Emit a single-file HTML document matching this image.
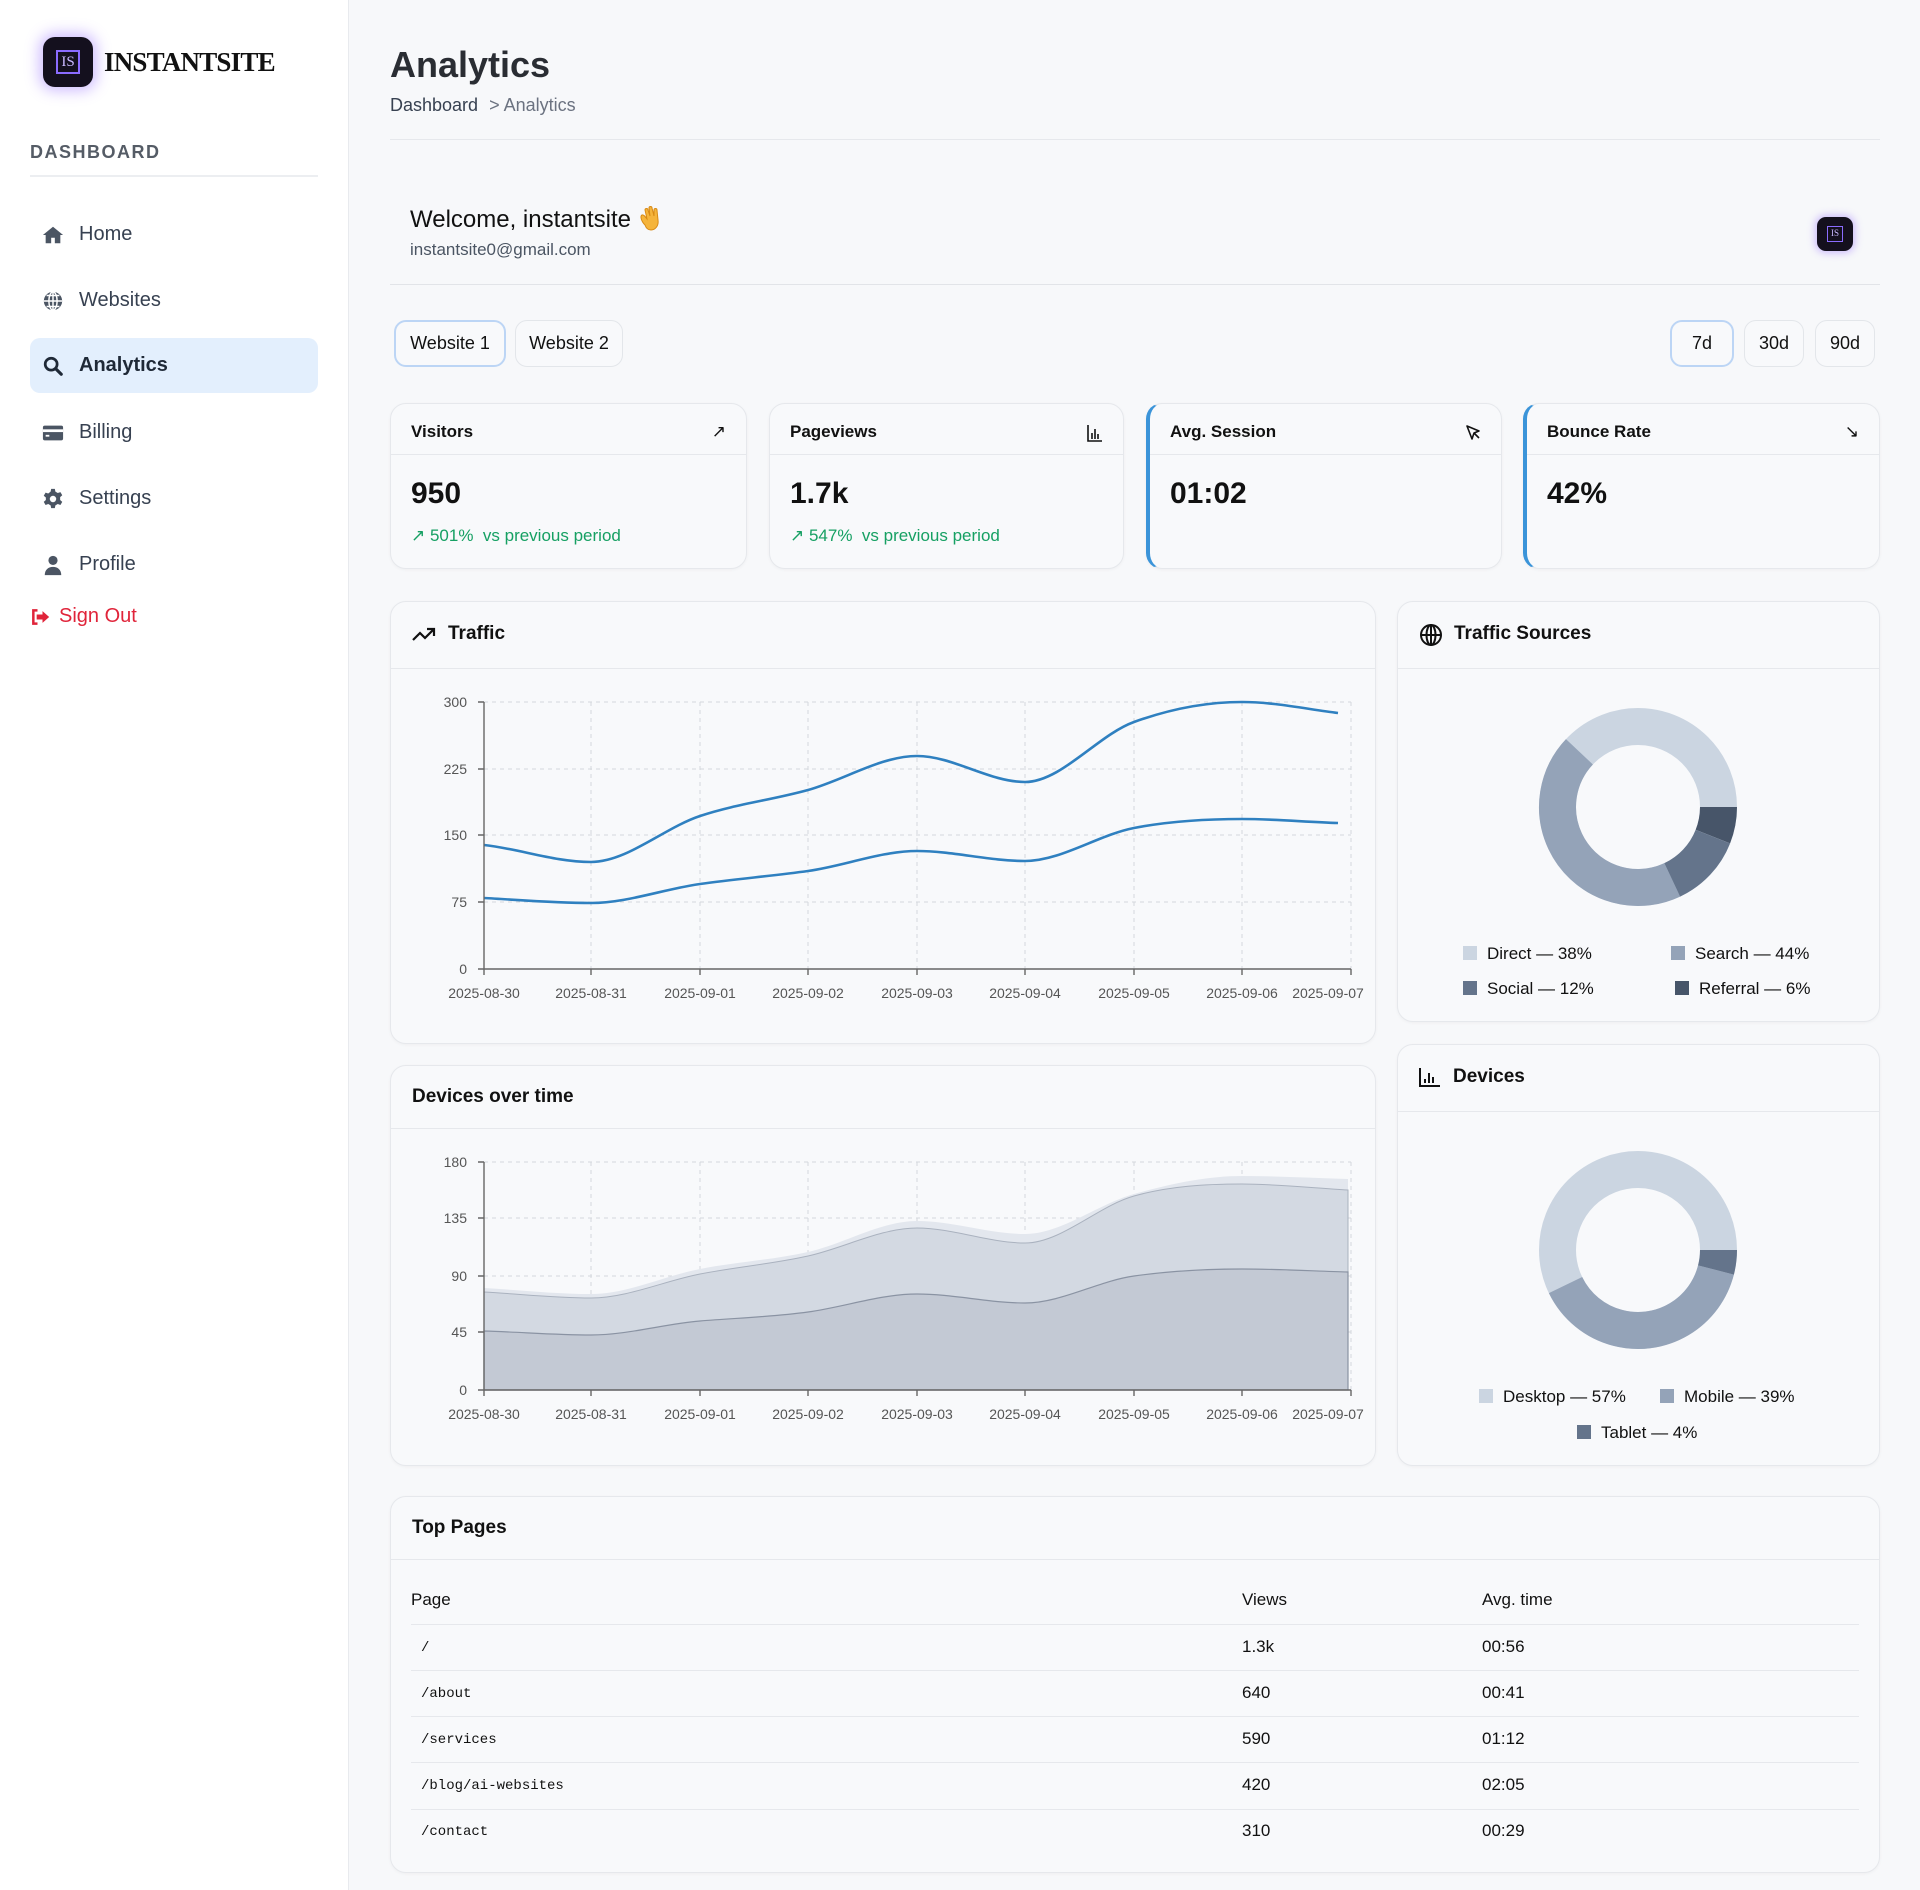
<!DOCTYPE html>
<html><head><meta charset="utf-8"><style>
*{box-sizing:border-box;margin:0;padding:0}
body{width:1920px;height:1890px;background:#f7f8fa;font-family:"Liberation Sans",Arial,sans-serif;color:#111;position:relative;overflow:hidden}
.a{position:absolute}
#side{left:0;top:0;width:349px;height:1890px;background:#fff;border-right:1px solid #e8eaee}
.nav{position:absolute;left:30px;width:288px;height:55px;display:flex;align-items:center;padding-left:12px;font-size:20px;color:#374151}
.nav svg{width:22px;height:22px;margin-right:15px;fill:#4b5563}
.card{position:absolute;background:#f8f9fb;border:1px solid #e6e8ec;border-radius:16px;box-shadow:0 1px 3px rgba(0,0,0,.04)}
.ch{position:absolute;left:0;right:0;border-bottom:1px solid #e6e8ec}
.ttl{position:absolute;font-weight:bold;font-size:19px}
.btn{position:absolute;height:47px;border:1px solid #e3e6ea;border-radius:12px;background:#f8f9fb;font-size:18px;display:flex;align-items:center;justify-content:center}
.btn.on{border:2px solid #bcd5f5}
.stt{position:absolute;left:20px;top:18px;font-size:17px;font-weight:bold}
.val{position:absolute;left:20px;top:73px;font-size:30px;font-weight:bold}
.chg{position:absolute;left:20px;top:122px;font-size:17px;color:#16a063}
.sq{display:inline-block;width:14px;height:14px;vertical-align:-1px;margin-right:10px}
.leg{position:absolute;font-size:17px;color:#111;white-space:nowrap}
.ax{font-family:"Liberation Sans",sans-serif;font-size:14px;fill:#555}
.row{position:absolute;left:411px;width:1448px;border-top:1px solid #e6e8ec}
.td{position:absolute;font-size:17px}
.mono{font-family:"Liberation Mono",monospace;font-size:14px}
</style></head><body>
<div id="side" class="a">
  <div class="a" style="left:43px;top:37px;width:50px;height:50px;border-radius:12px;background:#14101e;box-shadow:0 0 14px 4px rgba(150,110,255,.45)">
    <div class="a" style="left:13px;top:13px;width:24px;height:24px;border:2px solid #8b6cff;color:#c9b8ff;font-family:'Liberation Serif',serif;font-size:15px;text-align:center;line-height:20px">IS</div>
  </div>
  <div class="a" style="left:104px;top:47px;font-family:'Liberation Serif',serif;font-size:27px;font-weight:bold;letter-spacing:-.8px;color:#111">INSTANTSITE</div>
  <div class="a" style="left:30px;top:142px;font-size:18px;font-weight:bold;color:#555c66;letter-spacing:1.5px">DASHBOARD</div>
  <div class="a" style="left:30px;top:175px;width:288px;border-top:2px solid #eceef1"></div>
  <div class="nav" style="top:207px"><svg viewBox="0 0 24 24"><path d="M12 3 1 12h3v9h6v-6h4v6h6v-9h3z"/></svg>Home</div>
  <div class="nav" style="top:273px"><svg viewBox="0 0 24 24"><circle cx="12" cy="12" r="10"/><path d="M2 12h20M12 2v20M5 6h14M5 18h14" stroke="#fff" stroke-width="1.6"/><ellipse cx="12" cy="12" rx="4.5" ry="10" fill="none" stroke="#fff" stroke-width="1.6"/></svg>Websites</div>
  <div class="nav" style="top:338px;background:#e3effd;border-radius:10px;font-weight:bold;color:#1f2937"><svg viewBox="0 0 24 24"><circle cx="10" cy="10" r="6.5" fill="none" stroke="#1f2937" stroke-width="3"/><path d="M15 15l6 6" stroke="#1f2937" stroke-width="3.4" stroke-linecap="round"/></svg>Analytics</div>
  <div class="nav" style="top:405px"><svg viewBox="0 0 24 24"><rect x="1" y="4" width="22" height="16" rx="2"/><rect x="1" y="8" width="22" height="3" fill="#fff"/><rect x="4" y="14" width="4" height="2" fill="#fff"/></svg>Billing</div>
  <div class="nav" style="top:471px"><svg viewBox="0 0 24 24"><path d="M10 1h4l.6 3 2.6 1.5 2.9-1 2 3.4-2.3 2v3.2l2.3 2-2 3.4-2.9-1-2.6 1.5-.6 3h-4l-.6-3-2.6-1.5-2.9 1-2-3.4 2.3-2V10.4L1.9 8.4l2-3.4 2.9 1L9.4 4z"/><circle cx="12" cy="12" r="3.5" fill="#fff"/></svg>Settings</div>
  <div class="nav" style="top:537px"><svg viewBox="0 0 24 24"><circle cx="12" cy="7" r="5"/><path d="M3 23c0-6 4-9 9-9s9 3 9 9z"/></svg>Profile</div>
  <div class="a" style="left:30px;top:605px;font-size:20px;color:#e0243a;display:flex;align-items:center"><svg viewBox="0 0 24 24" width="20" height="20" style="margin-right:9px"><path d="M9 4H4v16h5" fill="none" stroke="#e0243a" stroke-width="3"/><path d="M8 9h7V5l8 7-8 7v-4H8z" fill="#e0243a"/></svg>Sign Out</div>
</div>

<div class="a" style="left:390px;top:44px;font-size:36px;font-weight:bold;color:#2a2d33">Analytics</div>
<div class="a" style="left:390px;top:95px;font-size:18px;color:#374151">Dashboard <span style="color:#6b7280;margin-left:6px">&gt; Analytics</span></div>
<div class="a" style="left:390px;top:139px;width:1490px;border-top:1px solid #e6e8ec"></div>
<div class="a" style="left:410px;top:203px;font-size:24px;color:#111">Welcome, instantsite <svg width="26" height="28" viewBox="0 0 26 28" style="vertical-align:-4px"><path d="M7 22c-4-4-5-9-3-10s4 3 5 4l-2-9c0-2 3-2 3 0l2 6-1-8c0-2 3-2 3 0l2 8 0-6c0-2 3-2 3 0l1 10c1 6-3 10-7 10-3 0-5-2-6-5z" fill="#f5b43b" stroke="#d88a15" stroke-width="1"/></svg></div>
<div class="a" style="left:410px;top:240px;font-size:17px;color:#4b5563">instantsite0@gmail.com</div>
<div class="a" style="left:1817px;top:217px;width:36px;height:34px;border-radius:9px;background:#14101e;box-shadow:0 0 8px 2px rgba(150,110,255,.45)"><div class="a" style="left:10px;top:9px;width:16px;height:16px;border:1.5px solid #8b6cff;color:#c9b8ff;font-size:9px;text-align:center;line-height:13px;font-family:'Liberation Serif',serif">IS</div></div>
<div class="a" style="left:390px;top:284px;width:1490px;border-top:1px solid #e2e4e8"></div>

<div class="btn on" style="left:394px;top:320px;width:112px">Website 1</div>
<div class="btn" style="left:515px;top:320px;width:108px">Website 2</div>
<div class="btn on" style="left:1670px;top:320px;width:64px">7d</div>
<div class="btn" style="left:1744px;top:320px;width:60px">30d</div>
<div class="btn" style="left:1815px;top:320px;width:60px">90d</div>

<div class="card" style="left:390px;top:403px;width:357px;height:166px"><div class="ch" style="top:50px"></div><div class="stt">Visitors</div><div class="a" style="right:20px;top:18px;font-size:17px">↗</div><div class="val">950</div><div class="chg">↗ 501%&nbsp; vs previous period</div></div>
<div class="card" style="left:769px;top:403px;width:355px;height:166px"><div class="ch" style="top:50px"></div><div class="stt">Pageviews</div><svg class="a" style="right:20px;top:20px" width="16" height="18" viewBox="0 0 16 18"><path d="M1 1v16h14M5 15V9M8 15V5M11 15V10" stroke="#111" stroke-width="1.6" fill="none"/></svg><div class="val">1.7k</div><div class="chg">↗ 547%&nbsp; vs previous period</div></div>
<div class="card" style="left:1146px;top:403px;width:356px;height:166px;border-left:4px solid #3b94d9"><div class="ch" style="top:50px"></div><div class="stt">Avg. Session</div><svg class="a" style="right:20px;top:20px" width="16" height="18" viewBox="0 0 16 18"><path d="M2 2l12 5-5 2-2 6z M9 9l5 5" stroke="#111" stroke-width="1.6" fill="none" stroke-linejoin="round"/></svg><div class="val">01:02</div></div>
<div class="card" style="left:1523px;top:403px;width:357px;height:166px;border-left:4px solid #3b94d9"><div class="ch" style="top:50px"></div><div class="stt">Bounce Rate</div><div class="a" style="right:20px;top:18px;font-size:17px">↘</div><div class="val">42%</div></div>

<div class="card" style="left:390px;top:601px;width:986px;height:443px"><div class="ch" style="top:66px"></div>
<svg class="a" style="left:20px;top:22px" width="26" height="20" viewBox="0 0 26 20"><path d="M2 16l7-7 5 5 9-9M16 5h7v7" stroke="#111" stroke-width="2.2" fill="none"/></svg>
<div class="ttl" style="left:57px;top:21px">Traffic</div></div>
<div class="card" style="left:1397px;top:601px;width:483px;height:421px"><div class="ch" style="top:66px"></div>
<svg class="a" style="left:21px;top:21px" width="24" height="24" viewBox="0 0 24 24"><circle cx="12" cy="12" r="10" fill="none" stroke="#111" stroke-width="2"/><path d="M2 12h20M12 2v20" stroke="#111" stroke-width="2"/><ellipse cx="12" cy="12" rx="4.5" ry="10" fill="none" stroke="#111" stroke-width="2"/></svg>
<div class="ttl" style="left:56px;top:21px">Traffic Sources</div></div>
<div class="card" style="left:390px;top:1065px;width:986px;height:401px"><div class="ch" style="top:62px"></div><div class="ttl" style="left:21px;top:20px">Devices over time</div></div>
<div class="card" style="left:1397px;top:1044px;width:483px;height:422px"><div class="ch" style="top:66px"></div>
<svg class="a" style="left:21px;top:22px" width="22" height="20" viewBox="0 0 22 20"><path d="M1 1v18h20M6 16v-4M10 16V6M14 16v-6" stroke="#111" stroke-width="2" fill="none"/></svg>
<div class="ttl" style="left:55px;top:21px">Devices</div></div>
<div class="card" style="left:390px;top:1496px;width:1490px;height:377px"><div class="ch" style="top:62px"></div><div class="ttl" style="left:21px;top:20px">Top Pages</div></div>

<svg class="a" style="left:0;top:0" width="1920" height="1890">
<g stroke="#d4d7dc" stroke-dasharray="4 4" stroke-width="1">
<path d="M484 702H1351M484 769H1351M484 835H1351M484 902H1351"/>
<path d="M591 702V969M700 702V969M808 702V969M917 702V969M1025 702V969M1134 702V969M1242 702V969M1351 702V969"/>
<path d="M484 1162H1351M484 1218H1351M484 1276H1351M484 1332H1351"/>
<path d="M591 1162V1390M700 1162V1390M808 1162V1390M917 1162V1390M1025 1162V1390M1134 1162V1390M1242 1162V1390M1351 1162V1390"/>
</g>
<path d="M484 1288C520 1290 555 1294 591 1294C627 1294 664 1276 700 1269C736 1262 772 1260 808 1252C844 1244 881 1221 917 1221C953 1221 989 1234 1025 1234C1061 1234 1098 1204 1134 1194C1170 1184 1206 1176 1242 1176C1277 1176 1313 1178 1348 1179V1390H484Z" fill="#e3e7ee"/>
<path d="M484 1292C520 1294 555 1298 591 1298C627 1298 664 1281 700 1274C736 1267 772 1264 808 1256C844 1248 881 1228 917 1228C953 1228 989 1243 1025 1243C1061 1243 1098 1206 1134 1196C1170 1186 1206 1184 1242 1184C1277 1184 1313 1188 1348 1190V1390H484Z" fill="#d3d9e2" stroke="#aab2bf" stroke-width="1"/>
<path d="M484 1331C520 1332 555 1335 591 1335C627 1335 664 1324 700 1321C736 1318 772 1317 808 1312C844 1307 881 1294 917 1294C953 1294 989 1303 1025 1303C1061 1303 1098 1281 1134 1276C1170 1271 1206 1269 1242 1269C1277 1269 1313 1271 1348 1272V1390H484Z" fill="#c3c9d4" stroke="#8a93a3" stroke-width="1.2"/>
<g fill="none" stroke="#2f80c0" stroke-width="2.6">
<path d="M484 845C520 849 555 862 591 862C627 862 664 828 700 816C736 804 772 800 808 790C844 780 881 756 917 756C953 756 989 782 1025 782C1061 782 1098 735 1134 722C1170 709 1206 702 1242 702C1274 702 1306 709 1338 713"/>
<path d="M484 898C520 900 555 903 591 903C627 903 664 889 700 884C736 879 772 876 808 871C844 866 881 851 917 851C953 851 989 861 1025 861C1061 861 1098 835 1134 828C1170 821 1206 819 1242 819C1274 819 1306 822 1338 823"/>
</g>
<g stroke="#666" stroke-width="1.4" fill="none">
<path d="M484 702V969H1351M478 702H484M478 769H484M478 835H484M478 902H484M478 969H484"/>
<path d="M484 969v6M591 969v6M700 969v6M808 969v6M917 969v6M1025 969v6M1134 969v6M1242 969v6M1351 969v6"/>
<path d="M484 1162V1390H1351M478 1162H484M478 1218H484M478 1276H484M478 1332H484M478 1390H484"/>
<path d="M484 1390v6M591 1390v6M700 1390v6M808 1390v6M917 1390v6M1025 1390v6M1134 1390v6M1242 1390v6M1351 1390v6"/>
</g>
<g class="ax" text-anchor="end">
<text x="467" y="707">300</text><text x="467" y="774">225</text><text x="467" y="840">150</text><text x="467" y="907">75</text><text x="467" y="974">0</text>
<text x="467" y="1167">180</text><text x="467" y="1223">135</text><text x="467" y="1281">90</text><text x="467" y="1337">45</text><text x="467" y="1395">0</text>
</g>
<g class="ax" text-anchor="middle">
<text x="484" y="998">2025-08-30</text><text x="591" y="998">2025-08-31</text><text x="700" y="998">2025-09-01</text><text x="808" y="998">2025-09-02</text><text x="917" y="998">2025-09-03</text><text x="1025" y="998">2025-09-04</text><text x="1134" y="998">2025-09-05</text><text x="1242" y="998">2025-09-06</text><text x="1328" y="998">2025-09-07</text>
<text x="484" y="1419">2025-08-30</text><text x="591" y="1419">2025-08-31</text><text x="700" y="1419">2025-09-01</text><text x="808" y="1419">2025-09-02</text><text x="917" y="1419">2025-09-03</text><text x="1025" y="1419">2025-09-04</text><text x="1134" y="1419">2025-09-05</text><text x="1242" y="1419">2025-09-06</text><text x="1328" y="1419">2025-09-07</text>
</g>
<g transform="translate(1638 807)" fill="none" stroke-width="37">
<circle r="80.5" stroke="#cbd5e1"/>
<circle r="80.5" stroke="#94a3b8" stroke-dasharray="222.6 600" transform="rotate(64.8)"/>
<circle r="80.5" stroke="#64748b" stroke-dasharray="60.7 600" transform="rotate(21.6)"/>
<circle r="80.5" stroke="#475569" stroke-dasharray="30.3 600"/>
</g>
<g transform="translate(1638 1250)" fill="none" stroke-width="37">
<circle r="80.5" stroke="#cbd5e1"/>
<circle r="80.5" stroke="#94a3b8" stroke-dasharray="196.3 600" transform="rotate(14.4)"/>
<circle r="80.5" stroke="#64748b" stroke-dasharray="20.2 600"/>
</g>
</svg>

<div class="leg" style="left:1463px;top:944px"><span class="sq" style="background:#cbd5e1"></span>Direct — 38%</div>
<div class="leg" style="left:1671px;top:944px"><span class="sq" style="background:#94a3b8"></span>Search — 44%</div>
<div class="leg" style="left:1463px;top:979px"><span class="sq" style="background:#64748b"></span>Social — 12%</div>
<div class="leg" style="left:1675px;top:979px"><span class="sq" style="background:#475569"></span>Referral — 6%</div>
<div class="leg" style="left:1479px;top:1387px"><span class="sq" style="background:#cbd5e1"></span>Desktop — 57%</div>
<div class="leg" style="left:1660px;top:1387px"><span class="sq" style="background:#94a3b8"></span>Mobile — 39%</div>
<div class="leg" style="left:1577px;top:1423px"><span class="sq" style="background:#64748b"></span>Tablet — 4%</div>

<div class="td" style="left:411px;top:1590px">Page</div><div class="td" style="left:1242px;top:1590px">Views</div><div class="td" style="left:1482px;top:1590px">Avg. time</div>
<div class="row" style="top:1624px"></div><div class="row" style="top:1670px"></div><div class="row" style="top:1716px"></div><div class="row" style="top:1762px"></div><div class="row" style="top:1809px"></div>
<div class="td mono" style="left:421px;top:1640px">/</div><div class="td" style="left:1242px;top:1637px">1.3k</div><div class="td" style="left:1482px;top:1637px">00:56</div>
<div class="td mono" style="left:421px;top:1686px">/about</div><div class="td" style="left:1242px;top:1683px">640</div><div class="td" style="left:1482px;top:1683px">00:41</div>
<div class="td mono" style="left:421px;top:1732px">/services</div><div class="td" style="left:1242px;top:1729px">590</div><div class="td" style="left:1482px;top:1729px">01:12</div>
<div class="td mono" style="left:421px;top:1778px">/blog/ai-websites</div><div class="td" style="left:1242px;top:1775px">420</div><div class="td" style="left:1482px;top:1775px">02:05</div>
<div class="td mono" style="left:421px;top:1824px">/contact</div><div class="td" style="left:1242px;top:1821px">310</div><div class="td" style="left:1482px;top:1821px">00:29</div>
</body></html>
